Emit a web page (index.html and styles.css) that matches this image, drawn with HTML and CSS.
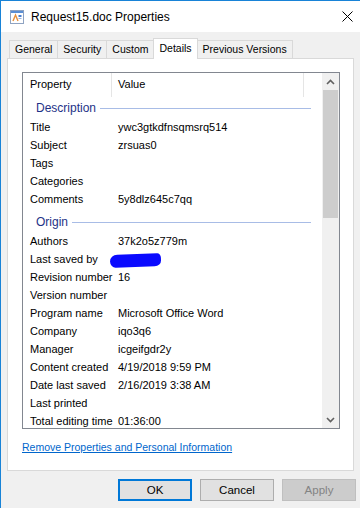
FILE: index.html
```html
<!DOCTYPE html>
<html lang="en">

<head>
    <meta charset="UTF-8">
    <meta name="viewport" content="width=device-width, initial-scale=1.0">
    <title>Request15.doc Properties</title>
    <link rel="stylesheet" href="styles.css">
</head>

<body>
    <div class="window">
        <div class="titlebar">
            <svg class="doc-icon" width="14" height="14" viewBox="0 0 14 14">
                <rect x="0.5" y="0.5" width="13" height="13" fill="#ffffff" stroke="#8fa3c2"/>
                <rect x="1" y="1" width="12" height="2" fill="#5b8fd4"/>
                <path d="M3 11 L5.5 5 L8 11" fill="none" stroke="#e8903a" stroke-width="1.4"/>
                <rect x="8.5" y="5" width="3" height="2" fill="#4a7fd0"/>
                <rect x="8.5" y="8" width="3" height="1" fill="#9bb4dc"/>
            </svg>
            <span class="title">Request15.doc Properties</span>
            <svg class="close" width="11" height="11" viewBox="0 0 11 11">
                <path d="M0.5 0.5 L10.5 10.5 M10.5 0.5 L0.5 10.5" stroke="#000000" stroke-width="1"/>
            </svg>
        </div>

        <div class="dialog">
            <div class="tabs">
                <div class="tab">General</div>
                <div class="tab">Security</div>
                <div class="tab">Custom</div>
                <div class="tab active">Details</div>
                <div class="tab">Previous Versions</div>
            </div>

            <div class="panel">
                <div class="list">
                    <div class="list-content">
                        <div class="list-head">
                            <div class="col-prop">Property</div>
                            <div class="col-val">Value</div>
                        </div>

                        <div class="group"><span>Description</span></div>
                        <div class="row"><span class="prop">Title</span><span class="val">ywc3gtkdfnsqmsrq514</span></div>
                        <div class="row"><span class="prop">Subject</span><span class="val">zrsuas0</span></div>
                        <div class="row"><span class="prop">Tags</span><span class="val"></span></div>
                        <div class="row"><span class="prop">Categories</span><span class="val"></span></div>
                        <div class="row"><span class="prop">Comments</span><span class="val">5y8dlz645c7qq</span></div>

                        <div class="group"><span>Origin</span></div>
                        <div class="row"><span class="prop">Authors</span><span class="val">37k2o5z779m</span></div>
                        <div class="row"><span class="prop">Last saved by</span><span class="val"><span class="scribble"></span></span></div>
                        <div class="row"><span class="prop">Revision number</span><span class="val">16</span></div>
                        <div class="row"><span class="prop">Version number</span><span class="val"></span></div>
                        <div class="row"><span class="prop">Program name</span><span class="val">Microsoft Office Word</span></div>
                        <div class="row"><span class="prop">Company</span><span class="val">iqo3q6</span></div>
                        <div class="row"><span class="prop">Manager</span><span class="val">icgeifgdr2y</span></div>
                        <div class="row"><span class="prop">Content created</span><span class="val">4/19/2018 9:59 PM</span></div>
                        <div class="row"><span class="prop">Date last saved</span><span class="val">2/16/2019 3:38 AM</span></div>
                        <div class="row"><span class="prop">Last printed</span><span class="val"></span></div>
                        <div class="row"><span class="prop">Total editing time</span><span class="val">01:36:00</span></div>
                    </div>

                    <div class="scrollbar">
                        <div class="arrow">
                            <svg width="9" height="6" viewBox="0 0 9 6"><path d="M1 5 L4.5 1.5 L8 5" fill="none" stroke="#606060" stroke-width="1.6"/></svg>
                        </div>
                        <div class="thumb"></div>
                        <div class="track"></div>
                        <div class="arrow">
                            <svg width="9" height="6" viewBox="0 0 9 6"><path d="M1 1 L4.5 4.5 L8 1" fill="none" stroke="#606060" stroke-width="1.6"/></svg>
                        </div>
                    </div>
                </div>

                <a class="remove-link" href="#">Remove Properties and Personal Information</a>
            </div>

            <div class="buttons">
                <button class="btn default">OK</button>
                <button class="btn">Cancel</button>
                <button class="btn disabled">Apply</button>
            </div>
        </div>
    </div>
</body>

</html>
```

FILE: styles.css
```css
body {
    margin: 0;
    padding: 0;
    background: #f0f0f0;
    font-family: "Liberation Sans", Arial, sans-serif;
    font-size: 11px;
    color: #000000;
    overflow: hidden;
}

.window {
    width: 359px;
    height: 507px;
    border-left: 1px solid #1883d7;
    border-top: 1px solid #1883d7;
    background: #f0f0f0;
}

.titlebar {
    height: 31px;
    background: #ffffff;
    display: flex;
    align-items: center;
    padding-left: 9px;
}

.doc-icon {
    margin-top: 1px;
}

.title {
    margin-left: 7px;
    font-size: 12px;
    margin-top: 1px;
}

.close {
    margin-left: auto;
    margin-right: 7px;
    margin-top: -1px;
}

.dialog {
    padding-top: 6px;
}

/* tab strip */
.tabs {
    display: flex;
    align-items: flex-end;
    height: 21px;
    padding-left: 8px;
    margin-bottom: -1px;
    position: relative;
    z-index: 1;
}

.tab {
    box-sizing: border-box;
    height: 19px;
    line-height: 17px;
    padding: 0 5px;
    border: 1px solid #d9d9d9;
    background: #f0f0f0;
    margin-left: -1px;
    font-size: 10.5px;
}

.tab:first-child {
    margin-left: 0;
}

.tab.active {
    height: 21px;
    line-height: 19px;
    background: #ffffff;
    border-bottom: none;
    padding: 0 5px;
}

.panel {
    box-sizing: border-box;
    margin-left: 6px;
    width: 347px;
    height: 413px;
    border: 1px solid #d9d9d9;
    background: #ffffff;
    padding: 13px 0 0 14px;
}

/* details list */
.list {
    box-sizing: border-box;
    width: 318px;
    height: 357px;
    border: 1px solid #828790;
    display: flex;
    overflow: hidden;
}

.list-content {
    flex: 1;
    overflow: hidden;
}

.list-head {
    display: flex;
    height: 24px;
    line-height: 23px;
}

.col-prop {
    box-sizing: border-box;
    width: 89px;
    padding-left: 7px;
    border-right: 1px solid #e5e5e5;
}

.col-val {
    box-sizing: border-box;
    width: 192px;
    padding-left: 6px;
    border-right: 1px solid #e5e5e5;
}

.group {
    display: flex;
    align-items: center;
    height: 21px;
    padding-left: 13px;
    margin-right: 11px;
    color: #1e3287;
    font-size: 12px;
}

.group::after {
    content: "";
    flex: 1;
    border-top: 1px solid #a8bce6;
    margin-left: 4px;
    margin-top: 1px;
}

.row + .group {
    margin-top: 3px;
}

.row {
    display: flex;
    height: 18px;
    line-height: 18px;
    white-space: nowrap;
}

.prop {
    width: 88px;
    padding-left: 7px;
    box-sizing: border-box;
}

.val {
    padding-left: 7px;
}

.scribble {
    display: inline-block;
    width: 51px;
    height: 13px;
    background: #0a0aff;
    border-radius: 8px 4px 7px 6px / 7px 5px 6px 7px;
    vertical-align: middle;
    margin-left: -8px;
    margin-top: 1px;
    transform: rotate(-2deg);
}

.scrollbar {
    width: 17px;
    display: flex;
    flex-direction: column;
    background: #f0f0f0;
}

.arrow {
    height: 17px;
    display: flex;
    align-items: center;
    justify-content: center;
}

.thumb {
    height: 128px;
    margin: 0 1px;
    background: #cdcdcd;
}

.track {
    flex: 1;
}

.remove-link {
    display: block;
    margin-top: 10px;
    line-height: 16px;
    color: #0066cc;
    font-size: 10.5px;
}

/* dialog buttons */
.buttons {
    display: flex;
    justify-content: flex-end;
    gap: 8px;
    padding-right: 4px;
    margin-top: 8px;
}

.btn {
    box-sizing: border-box;
    width: 74px;
    height: 22px;
    padding: 0;
    font-family: "Liberation Sans", Arial, sans-serif;
    font-size: 11.5px;
    background: #e1e1e1;
    border: 1px solid #adadad;
    color: #000000;
}

.btn.default {
    border: 2px solid #0078d7;
}

.btn.disabled {
    background: #cccccc;
    border-color: #bfbfbf;
    color: #838383;
}
```
